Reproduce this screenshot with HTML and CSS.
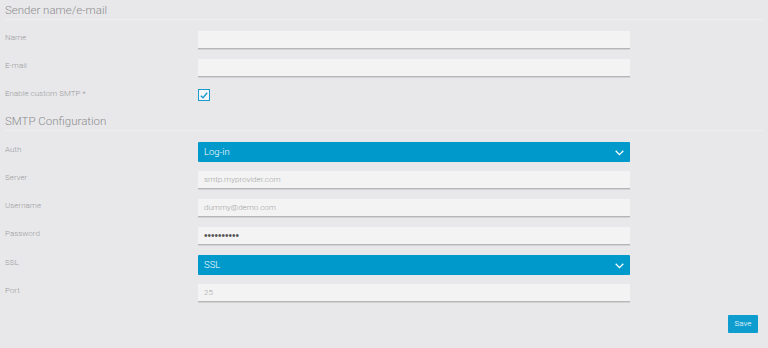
FILE: index.html
```html
<!DOCTYPE html>
<html lang="en">
<head>
<meta charset="UTF-8">
<meta name="viewport" content="width=device-width, initial-scale=1.0">
<title>SMTP settings</title>
<link rel="stylesheet" href="styles.css">
</head>
<body>
<div id="settings">
    <h2 class="section-title">Sender name/e-mail</h2>
    <div class="row">
        <label class="row-label">Name</label>
        <div class="field"></div>
    </div>
    <div class="row">
        <label class="row-label">E-mail</label>
        <div class="field"></div>
    </div>
    <div class="row row-check">
        <label class="row-label">Enable custom SMTP *</label>
        <span class="checkbox">
            <svg width="8" height="7" viewBox="0 0 8 7"><path d="M0.8 3.8 L3 5.8 L7.2 0.8" fill="none" stroke="#1a9bd0" stroke-width="1.4"/></svg>
        </span>
    </div>

    <h2 class="section-title">SMTP Configuration</h2>
    <div class="row row-select">
        <label class="row-label">Auth</label>
        <div class="select">Log-in
            <svg class="chevron" width="9" height="6" viewBox="0 0 9 6"><path d="M0.7 0.8 L4.5 4.6 L8.3 0.8" fill="none" stroke="#fff" stroke-width="1.3"/></svg>
        </div>
    </div>
    <div class="row">
        <label class="row-label">Server</label>
        <div class="field">smtp.myprovider.com</div>
    </div>
    <div class="row">
        <label class="row-label">Username</label>
        <div class="field">dummy@demo.com</div>
    </div>
    <div class="row">
        <label class="row-label">Password</label>
        <div class="field field-pass">&#8226;&#8226;&#8226;&#8226;&#8226;&#8226;&#8226;&#8226;&#8226;&#8226;</div>
    </div>
    <div class="row row-select">
        <label class="row-label">SSL</label>
        <div class="select">SSL
            <svg class="chevron" width="9" height="6" viewBox="0 0 9 6"><path d="M0.7 0.8 L4.5 4.6 L8.3 0.8" fill="none" stroke="#fff" stroke-width="1.3"/></svg>
        </div>
    </div>
    <div class="row">
        <label class="row-label">Port</label>
        <div class="field">25</div>
    </div>

    <div class="actions">
        <a href="javascript:;" class="btn-save">Save</a>
    </div>
</div>
</body>
</html>
```

FILE: styles.css
```css
html, body {
    margin: 0;
    padding: 0;
}
body {
    height: 348px;
    background: #e8e8ea;
    font-family: Roboto, "Liberation Sans", sans-serif;
    font-weight: 300;
    overflow: hidden;
}
#settings {
    padding: 0 5px;
}
.section-title {
    margin: 0 0 11px;
    height: 19px;
    font-size: 11.5px;
    line-height: 21px;
    font-weight: 300;
    color: #8c8c8e;
    border-bottom: 1px solid #eeeef0;
}
.row {
    display: flex;
    align-items: flex-start;
    margin-bottom: 10px;
}
.row-label {
    width: 193px;
    flex: none;
    font-size: 8px;
    line-height: 14px;
    color: #9a9a9c;
}
.field {
    box-sizing: border-box;
    width: 432px;
    height: 18px;
    padding: 0 6px;
    background: #f3f3f3;
    border-bottom: 1px solid #b6b6b6;
    box-shadow: 0 1px 0 #d2d2d4;
    font-size: 8px;
    line-height: 18px;
    color: #a2a2a2;
}
.field-pass {
    font-family: "Liberation Sans", sans-serif;
    font-size: 10px;
    color: #555;
}
.row-select {
    margin-bottom: 9px;
}
.row-select .row-label {
    line-height: 16px;
}
.select {
    position: relative;
    box-sizing: border-box;
    width: 432px;
    height: 20px;
    padding: 0 6px;
    background: #0099cb;
    border-radius: 1px;
    font-size: 9.5px;
    line-height: 20px;
    color: #fff;
}
.chevron {
    position: absolute;
    right: 6px;
    top: 8px;
}
.row-check {
    height: 14px;
}
.checkbox {
    box-sizing: border-box;
    display: flex;
    align-items: center;
    justify-content: center;
    width: 12px;
    height: 12px;
    margin-top: 2px;
    background: #f4f7f9;
    border: 1.5px solid #1a9bd0;
}
.actions {
    display: flex;
    justify-content: flex-end;
    margin-top: 13px;
    padding-right: 5px;
}
.btn-save {
    width: 30px;
    height: 18px;
    background: #0f9dcf;
    border-radius: 1px;
    font-size: 8px;
    line-height: 18px;
    text-align: center;
    color: #fff;
    text-decoration: none;
}
```
